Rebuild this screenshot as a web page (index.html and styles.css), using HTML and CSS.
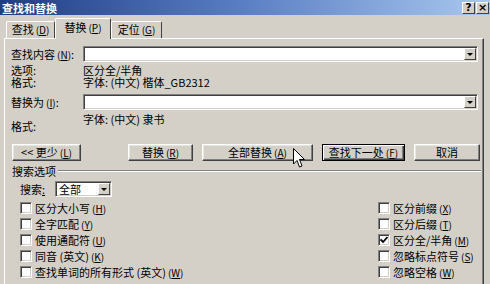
FILE: index.html
```html
<!DOCTYPE html>
<html lang="zh-CN">
<head>
    <meta charset="UTF-8">
    <title>查找和替换</title>
    <link rel="stylesheet" href="styles.css">
</head>
<body>
    <div class="dialog">
        <div class="titlebar">
            <span class="title">查找和替换</span>
            <div class="caption-btns">
                <span class="cbtn">?</span>
                <span class="cbtn">×</span>
            </div>
        </div>

        <div class="tabs">
            <div class="tab tab-find">查找<span class="key">(<u>D</u>)</span></div>
            <div class="tab tab-replace active">替换<span class="key">(<u>P</u>)</span></div>
            <div class="tab tab-goto">定位<span class="key">(<u>G</u>)</span></div>
        </div>

        <div class="panel">
            <div class="field-row">
                <span class="lbl">查找内容<span class="key">(<u>N</u>)</span>:</span>
                <div class="combo">
                    <span class="drop"><span class="arrow"></span></span>
                </div>
            </div>
            <div class="info-row first">
                <span class="lbl">选项:</span>
                <span>区分全/半角</span>
            </div>
            <div class="info-row">
                <span class="lbl">格式:</span>
                <span>字体: (中文) 楷体_GB2312</span>
            </div>

            <div class="field-row replace">
                <span class="lbl">替换为<span class="key">(<u>I</u>)</span>:</span>
                <div class="combo">
                    <span class="drop"><span class="arrow"></span></span>
                </div>
            </div>
            <div class="info-row format2">
                <span class="lbl">格式:</span>
                <span>字体: (中文) 隶书</span>
            </div>

            <div class="btn-row">
                <button class="btn btn-less">&lt;&lt; 更少<span class="key">(<u>L</u>)</span></button>
                <button class="btn btn-replace">替换<span class="key">(<u>R</u>)</span></button>
                <button class="btn btn-all">全部替换<span class="key">(<u>A</u>)</span></button>
                <button class="btn btn-next default">查找下一处<span class="key">(<u>F</u>)</span></button>
                <button class="btn btn-cancel">取消</button>
            </div>

            <div class="group-title">
                <span>搜索选项</span>
                <span class="groove"></span>
            </div>

            <div class="search-row">
                <span class="search-lbl">搜索<u>:</u></span>
                <div class="select">
                    <span class="select-text">全部</span>
                    <span class="drop"><span class="arrow"></span></span>
                </div>
            </div>

            <div class="opts">
                <div class="opt-col left">
                    <label class="opt"><span class="box"></span>区分大小写<span class="key">(<u>H</u>)</span></label>
                    <label class="opt"><span class="box"></span>全字匹配<span class="key">(<u>Y</u>)</span></label>
                    <label class="opt"><span class="box"></span>使用通配符<span class="key">(<u>U</u>)</span></label>
                    <label class="opt"><span class="box"></span>同音 (英文)<span class="key">(<u>K</u>)</span></label>
                    <label class="opt"><span class="box"></span>查找单词的所有形式 (英文)<span class="key">(<u>W</u>)</span></label>
                </div>
                <div class="opt-col right">
                    <label class="opt"><span class="box"></span>区分前缀<span class="key">(<u>X</u>)</span></label>
                    <label class="opt"><span class="box"></span>区分后缀<span class="key">(<u>T</u>)</span></label>
                    <label class="opt"><span class="box checked"><svg width="8" height="8" viewBox="0 0 8 8"><polyline points="0.5,3.5 3,6 7.5,1" fill="none" stroke="#000" stroke-width="1.8"/></svg></span>区分全/半角<span class="key">(<u>M</u>)</span></label>
                    <label class="opt"><span class="box"></span>忽略标点符号<span class="key">(<u>S</u>)</span></label>
                    <label class="opt"><span class="box"></span>忽略空格<span class="key">(<u>W</u>)</span></label>
                </div>
            </div>
        </div>

        <!-- mouse pointer over the buttons -->
        <svg class="cursor" width="12" height="20" viewBox="0 0 12 20">
            <path d="M0.5,0.5 L0.5,16 L4,12.5 L6.5,19 L9,18 L6.5,11.5 L11.5,11.5 Z" fill="#fff" stroke="#000" stroke-width="1"/>
        </svg>
    </div>
</body>
</html>
```

FILE: styles.css
```css
* {
    margin: 0;
    padding: 0;
    box-sizing: border-box;
}

body {
    font-family: "Noto Sans CJK SC", "Liberation Sans", sans-serif;
    font-size: 11px;
    color: #000;
    background: #d4d0c8;
}

u {
    text-decoration: underline;
}

.key {
    margin-left: 2px;
    font-size: 10px;
}

.dialog {
    position: relative;
    width: 490px;
    height: 284px;
    overflow: hidden;
    background: #d4d0c8;
}

/* title bar */
.titlebar {
    height: 15px;
    display: flex;
    align-items: center;
    justify-content: space-between;
    padding: 0 1px 0 2px;
    background: linear-gradient(to right, #1f3d86 0%, #5a7fc4 50%, #a9c8ee 100%);
}

.title {
    color: #fff;
    font-weight: 700;
    font-size: 11px;
    line-height: 14px;
}

.caption-btns {
    display: flex;
    gap: 1px;
}

.cbtn {
    width: 13px;
    height: 12px;
    background: #d4d0c8;
    border: 1px solid;
    border-color: #fff #404040 #404040 #fff;
    font: bold 11px "DejaVu Sans", sans-serif;
    line-height: 10px;
    text-align: center;
}

/* tabs */
.tabs {
    display: flex;
    align-items: flex-end;
    height: 23px;
    padding-left: 6px;
}

.tab {
    height: 17px;
    border: 1px solid;
    border-bottom: none;
    border-color: #fff #404040 transparent #fff;
    border-radius: 2px 2px 0 0;
    line-height: 15px;
    text-align: center;
}

.tab-find {
    width: 49px;
}

.tab-replace {
    width: 56px;
}

.tab-goto {
    width: 51px;
}

.tab.active {
    position: relative;
    z-index: 1;
    height: 21px;
    margin-bottom: -1px;
    background: #d4d0c8;
    line-height: 17px;
}

/* main panel */
.panel {
    width: 480px;
    height: 260px;
    margin-left: 4px;
    padding: 7px 0 0 6px;
    border: 1px solid;
    border-color: #fff #404040 #404040 #fff;
    box-shadow: inset -1px 0 #808080;
}

.field-row {
    display: flex;
    align-items: center;
    height: 16px;
}

.field-row.replace {
    margin-top: 6px;
}

.lbl {
    width: 72px;
    flex-shrink: 0;
}

.combo {
    width: 395px;
    height: 16px;
    display: flex;
    justify-content: flex-end;
    align-items: center;
    padding-right: 1px;
    background: #fff;
    border: 1px solid;
    border-color: #808080 #fff #fff #808080;
    box-shadow: inset 1px 1px #404040, inset -1px -1px #d4d0c8;
}

.drop {
    width: 12px;
    height: 12px;
    display: flex;
    align-items: center;
    justify-content: center;
    background: #d4d0c8;
    border: 1px solid;
    border-color: #fff #404040 #404040 #fff;
}

.arrow {
    width: 0;
    height: 0;
    border-left: 3px solid transparent;
    border-right: 3px solid transparent;
    border-top: 3px solid #000;
    margin-top: 1px;
}

.info-row {
    display: flex;
    height: 12px;
    line-height: 12px;
}

.info-row.first {
    margin-top: 2px;
}

.info-row.format2 {
    height: 20px;
    margin-top: 3px;
}

.info-row.format2 .lbl {
    padding-top: 7px;
}

/* buttons */
.btn-row {
    display: flex;
    gap: 9px;
    margin-top: 11px;
    padding-left: 1px;
}

.btn {
    height: 17px;
    font-family: inherit;
    font-size: 11px;
    line-height: 13px;
    color: #000;
    background: #d4d0c8;
    border: 1px solid;
    border-color: #fff #404040 #404040 #fff;
    box-shadow: inset -1px -1px #808080, inset 1px 1px #e8e6e1;
}

.btn-less {
    width: 69px;
}

.btn-replace {
    width: 65px;
    margin-left: 38px;
}

.btn-all {
    width: 111px;
}

.btn-next {
    width: 83px;
}

.btn-cancel {
    width: 66px;
}

.btn.default {
    border-color: #000;
    box-shadow: inset 1px 1px #fff, inset -1px -1px #404040, inset -2px -2px #808080;
}

/* search options */
.group-title {
    display: flex;
    align-items: center;
    height: 13px;
    margin-top: 3px;
    padding-left: 1px;
    padding-right: 2px;
}

.groove {
    flex: 1;
    height: 2px;
    margin-left: 2px;
    border-top: 1px solid #808080;
    border-bottom: 1px solid #fff;
}

.search-row {
    display: flex;
    align-items: center;
    height: 16px;
    margin-top: 4px;
    padding-left: 9px;
}

.search-lbl {
    width: 35px;
}

.select {
    width: 57px;
    height: 16px;
    display: flex;
    align-items: center;
    justify-content: space-between;
    padding: 0 1px 0 3px;
    background: #fff;
    border: 1px solid;
    border-color: #808080 #fff #fff #808080;
    box-shadow: inset 1px 1px #404040, inset -1px -1px #d4d0c8;
}

.select-text {
    line-height: 12px;
}

.opts {
    display: flex;
    margin-top: 3px;
    padding-left: 9px;
}

.opt-col.left {
    width: 358px;
}

.opt {
    display: flex;
    align-items: center;
    height: 16px;
    white-space: nowrap;
}

.box {
    width: 12px;
    height: 12px;
    margin-right: 3px;
    display: flex;
    align-items: center;
    justify-content: center;
    background: #fff;
    border: 1px solid;
    border-color: #808080 #fff #fff #808080;
    box-shadow: inset 1px 1px #404040, inset -1px -1px #d4d0c8;
}

.cursor {
    position: absolute;
    left: 293px;
    top: 148px;
}
```
